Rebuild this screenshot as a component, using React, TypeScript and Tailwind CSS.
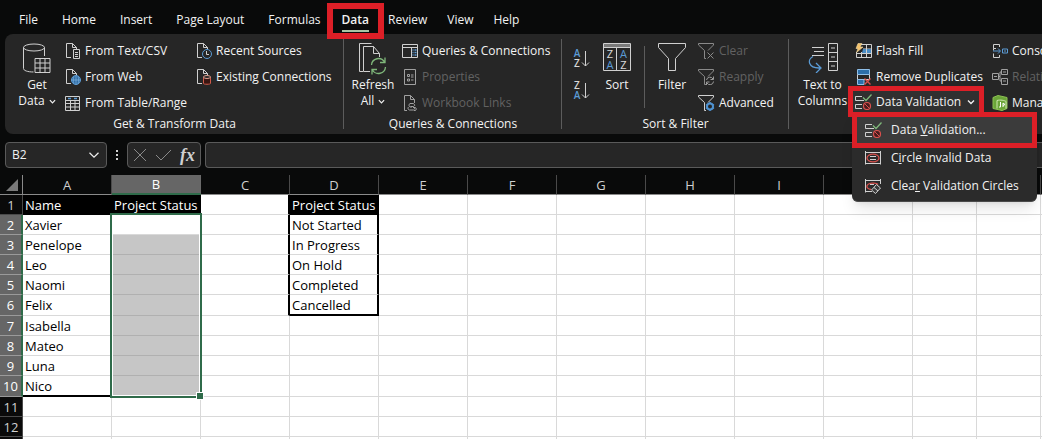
import { ReactNode } from "react";
import clsx from "clsx";

const TABS = ["File", "Home", "Insert", "Page Layout", "Formulas", "Data", "Review", "View", "Help"]

const COLUMNS = [
  { name: "A", width: 89 },
  { name: "B", width: 89 },
  { name: "C", width: 89 },
  { name: "D", width: 89 },
  { name: "E", width: 89 },
  { name: "F", width: 89 },
  { name: "G", width: 89 },
  { name: "H", width: 89 },
  { name: "I", width: 89 },
  { name: "J", width: 89 },
  { name: "K", width: 64 },
  { name: "L", width: 64 },
  { name: "M", width: 64 },
]

const NAMES = ["Name", "Xavier", "Penelope", "Leo", "Naomi", "Felix", "Isabella", "Mateo", "Luna", "Nico"]
const STATUSES = ["Project Status", "Not Started", "In Progress", "On Hold", "Completed", "Cancelled"]
const ROWS = [1, 2, 3, 4, 5, 6, 7, 8, 9, 10, 11, 12, 13]

/* ---------- icons ---------- */

function Icon({ w = 16, h = 16, children }: { w?: number, h?: number, children: ReactNode }) {
  return (
    <svg width={w} height={h} viewBox={`0 0 ${w} ${h}`} fill="none" stroke="#d0d0d0" className="shrink-0" aria-hidden="true">
      {children}
    </svg>
  )
}

function Chevron({ size = 7, stroke = 1.4 }: { size?: number, stroke?: number }) {
  return (
    <svg width={size} height={size} viewBox="0 0 8 8" fill="none" stroke="#f0f0f0" strokeWidth={stroke} className="inline-block shrink-0" aria-hidden="true">
      <path d="M1 2.5l3 3 3-3" />
    </svg>
  )
}

const PagePath = () => <path d="M6 14.5H1.5v-14h6l4 4V6M7.5.5v4h4" />

const GetDataIcon = () => (
  <Icon w={28} h={32}>
    <ellipse cx="11" cy="4.5" rx="10.5" ry="3.5" />
    <path d="M.5 4.5v21c0 2 4 3.5 10 3.5M21.5 4.5V13" />
    <path d="M12 15.5h15v14H12zM12 20h15M12 25h15M17 15.5v14M22 15.5v14" />
  </Icon>
)

const TextCsvIcon = () => (
  <Icon>
    <PagePath />
    <path d="M8.5 6.5h6v9h-6zM10 9.5h3M10 11.5h3M10 13.5h3" />
  </Icon>
)

const WebIcon = () => (
  <Icon>
    <PagePath />
    <circle cx="11" cy="11" r="4.5" fill="#2f6da5" stroke="#5b9bd5" />
    <path d="M6.5 11h9M11 6.5v9M9 7.5c-1 2-1 5 0 7M13 7.5c1 2 1 5 0 7" stroke="#8cbce6" strokeWidth=".6" />
  </Icon>
)

const TableIcon = () => (
  <Icon>
    <path d="M.5 1.5h14v14H.5zM.5 5.5h14M.5 8.5h14M.5 12h14M5.5 5.5v10M10 5.5v10" />
    <path d="M3 3.5h3M9 3.5h3" stroke="#5b9bd5" strokeWidth="1.5" />
  </Icon>
)

const RecentIcon = () => (
  <Icon>
    <PagePath />
    <circle cx="11" cy="11" r="4.5" stroke="#5b9bd5" fill="#262626" />
    <path d="M10.5 8v3.5H13" />
  </Icon>
)

const ExistingIcon = () => (
  <Icon>
    <PagePath />
    <path d="M7.5 8v6.5c0 1 7 1 7 0V8" stroke="#d05a4a" fill="#3a1612" />
    <ellipse cx="11" cy="8" rx="3.5" ry="1.5" stroke="#e0a090" fill="#262626" />
  </Icon>
)

const RefreshIcon = () => (
  <Icon w={28} h={32}>
    <path d="M4 28.500H.5V.5h12M11 28.500H4.500v-25h10l6 7V14M14.500 3.500v7h6" />
    <path d="M12.500 22a7 7 0 0 1 13-3M26.500 24a7 7 0 0 1-13 3M26 14.500V19.500h-5M13 31.500v-5h5" stroke="#7fb77a" strokeWidth="1.3" />
  </Icon>
)

const QueriesIcon = () => (
  <Icon>
    <path d="M.5 1.5h15v13H.5zM.5 4.500h15M9.500 4.500v10" />
    <path d="M10.500 7h1M10.500 9.500h1M10.500 12h1M12.500 7h2M12.500 9.500h2M12.500 12h2" stroke="#5b9bd5" strokeWidth="1.3" />
  </Icon>
)

const PropertiesIcon = () => (
  <Icon>
    <g stroke="#a0a0a0">
      <path d="M2.500.5h11v15h-11zM5.500 5.500h2v2h-2zM5.500 10h2v2h-2zM9 6h2.500M9 8h2.500M9 11h2.500" />
    </g>
  </Icon>
)

const LinksIcon = () => (
  <Icon>
    <g stroke="#a0a0a0">
      <path d="M5 15.500H2.500V.5h6l4 4V8M8.500.5v4h4" />
      <path d="M10 12H8a2 2 0 0 1 0-3.500h3a1.800 1.800 0 0 1 1.500 2.500M8.500 11.500h3a2 2 0 0 1 0 3.500h-4a1.800 1.800 0 0 1-1-3M11 12.500h2.500a2 2 0 0 1 0 3H12" />
    </g>
  </Icon>
)

function LetterSortIcon({ top, bottom }: { top: string, bottom: string }) {
  const color = (c: string) => c === "A" ? "#5b9bd5" : "#d8d8d8"
  return (
    <Icon w={18} h={22}>
      <g stroke="none" fontFamily="Open Sans, sans-serif" fontSize="10" fontWeight="600" textAnchor="middle">
        <text x="5" y="10" fill={color(top)}>{top}</text>
        <text x="5" y="20" fill={color(bottom)}>{bottom}</text>
      </g>
      <path d="M13.500 4v15M10 15.500l3.500 3.500 3.500-3.500" />
    </Icon>
  )
}

const SortIcon = () => (
  <Icon w={28} h={28}>
    <path d="M.5.5h27v27H.5zM13.500 4v23.500" />
    <path d="M1 2.500h26" stroke="#7a7a7a" strokeWidth="3" />
    <path d="M.5 4.500h27" />
    <g stroke="none" fontFamily="Open Sans, sans-serif" fontSize="11" textAnchor="middle">
      <text x="7" y="15" fill="#d8d8d8">Z</text>
      <text x="7" y="26" fill="#5b9bd5">A</text>
      <text x="20.500" y="15" fill="#5b9bd5">A</text>
      <text x="20.500" y="26" fill="#d8d8d8">Z</text>
    </g>
  </Icon>
)

const FilterIcon = () => (
  <Icon w={28} h={28}>
    <path d="M.5.5h27v4l-10 11v12h-7v-12L.5 4.500z" />
  </Icon>
)

function SmallFilter({ dim, children }: { dim?: boolean, children: ReactNode }) {
  return (
    <Icon w={17}>
      <path d="M8 15.500H6.500v-8L.5 2V.5h15V2l-5.500 5.500" stroke={dim ? "#8a8a8a" : "#d0d0d0"} />
      {children}
    </Icon>
  )
}

const ClearIcon = () => (
  <SmallFilter dim><path d="M9.500 9.500l6 6M15.500 9.500l-6 6" stroke="#8a8a8a" /></SmallFilter>
)

const ReapplyIcon = () => (
  <SmallFilter dim>
    <path d="M8.500 11a3.500 3.500 0 0 1 6.500-1M15.500 12.500a3.500 3.500 0 0 1-6.500 1.500M15.500 7.500v3h-3M8.500 16v-3h3" stroke="#9a9a9a" />
  </SmallFilter>
)

const AdvancedIcon = () => (
  <SmallFilter>
    <circle cx="12" cy="11.500" r="3" fill="#262626" stroke="#4f93d2" strokeWidth="2" />
    <path d="M12 7v2M12 14v2M8 9.500l1.500 1M14.500 12.500l1.500 1M8 13.500l1.500-1M14.500 10.500l1.500-1" stroke="#4f93d2" strokeWidth="1.5" />
  </SmallFilter>
)

const TextToColumnsIcon = () => (
  <Icon w={30} h={30}>
    <path d="M4 4.500h12M6 8.500h10M4 12.500h12" />
    <path d="M20.500.5h9v27h-9zM20.500 9.500h9M20.500 18.500h9M23 5h4M23 14h4M23 23h4" />
    <path d="M5 13.500c-6 3-5 12 7 11.500M8 20l5 5-5 5" stroke="#5b9bd5" strokeWidth="1.3" />
  </Icon>
)

const FlashIcon = () => (
  <Icon w={17}>
    <path d="M6 1.500h10.500v13H1.500V9M1.500 10.500h15M8 6h8.500M6.500 9v5.500M11.500 1.500v13" />
    <path d="M8 6h3v4H7zM12 6h4v4h-4z" fill="#4a8cc4" stroke="none" />
    <path d="M3 .5h4L5 4h3L1.500 9.500 3 5.500H1z" fill="#f4c26b" stroke="#f3dca8" strokeWidth=".6" />
  </Icon>
)

const DuplicatesIcon = () => (
  <Icon w={17}>
    <path d="M2.500.5h12v5h-12z" fill="#2c6ea8" stroke="#8fbfe8" />
    <path d="M2.500 5.500v5h12v-5" />
    <path d="M9 10.500H2.500v5H9z" fill="#2c6ea8" stroke="#8fbfe8" />
    <path d="M9.500 9.500l6 6M15.500 9.500l-6 6" stroke="#d8504d" strokeWidth="1.4" />
  </Icon>
)

const ValidationIcon = () => (
  <Icon w={17}>
    <path d="M7 2.500H.5v4H9M7 10.500H.5v4H7" />
    <path d="M8 3.500l3 3L16.500.5" stroke="#7fb77a" strokeWidth="1.3" />
    <circle cx="12" cy="12" r="3.500" stroke="#d8504d" fill="#4a1c1e" strokeWidth="1.2" />
    <path d="M9.500 9.500l5 5" stroke="#d8504d" />
  </Icon>
)

const CircleInvalidIcon = () => (
  <Icon w={17}>
    <path d="M.5 1v13.500M15.500 1v13.500M.5 2.500h15M.5 13.500h15M5 6.500h6M5 9.500h6" />
    <ellipse cx="8" cy="8" rx="6" ry="3.800" stroke="#d8504d" strokeWidth="1.3" />
  </Icon>
)

const ClearCirclesIcon = () => (
  <Icon w={17}>
    <path d="M.5 1v13.500M15.500 1v5M.5 2.500h15M.5 13.500H7M5 6.500h4" />
    <path d="M6 11.500C3 11 1.500 9.500 2 8c.5-3 9-4 11-1.500" stroke="#d8504d" strokeWidth="1.3" />
    <path d="M11.500 6.500l4 3.500-5 5.500-4-3.500zM9 9.500l4 3.500" fill="#3a3a3a" />
  </Icon>
)

const ConsolidateIcon = () => (
  <Icon>
    <path d="M7.500 4V1.500h-6v4H4M1.500 5.500v2M1.500 10.500v4h6V12" />
    <path d="M1 8h7M6 5.500L8.500 8 6 10.500M10.500 6h5v4h-5zM12 8h2" stroke="#5b9bd5" />
  </Icon>
)

const RelationsIcon = () => (
  <Icon>
    <g stroke="#a0a0a0">
      <path d="M.5 4.500h6v6h-6zM9.500.5h6v5h-6zM9.500 9.500h6v6h-6zM6.500 7.500H8V3h1.500M8 7.500V12h1.500M2 7.500h3M11 3h3M11 12h3" />
    </g>
  </Icon>
)

const ModelIcon = () => (
  <Icon>
    <path d="M1 2.500L6 .5l9 2v11l-5 2-9-2z" fill="#6ba539" stroke="#8cc152" />
    <path d="M5 5.500v8M5 5.500c3-1 8 0 9 1v7" stroke="#cfe8b0" />
    <path d="M8.500 7v5H7M11 12V8l2 1.500-2 1" stroke="#ffffff" />
  </Icon>
)

/* ---------- ribbon ---------- */

function RibbonGroup({ title, className, last, children }: { title?: string, className: string, last?: boolean, children: ReactNode }) {
  return (
    <section className={clsx("relative flex shrink-0 flex-col pt-1", className)}>
      <div className="flex h-[78px] items-start">{children}</div>
      {
        title &&
        <div className="text-center leading-4">{title}</div>
      }
      {!last && <div className="absolute right-0 top-[5px] h-[90px] w-px bg-[#5c5c5c]" />}
    </section>
  )
}

function BigButton({ icon, lines, menu, className }: { icon: ReactNode, lines: string[], menu?: boolean, className?: string }) {
  return (
    <button type="button" className={clsx("flex shrink-0 flex-col items-center pt-[5px] leading-4", className)}>
      <span className="flex h-[34px] items-start">{icon}</span>
      {lines.map((line, i) => (
        <span key={line} className="flex items-center gap-1 whitespace-nowrap">
          {line}
          {menu && i === lines.length - 1 && <Chevron />}
        </span>
      ))}
    </button>
  )
}

function SmallButton({ icon, label, disabled }: { icon: ReactNode, label: string, disabled?: boolean }) {
  return (
    <button type="button" disabled={disabled} className="flex h-[26px] items-center gap-1 whitespace-nowrap disabled:text-[#626262]">
      {icon}
      {label}
    </button>
  )
}

function MenuItem({ icon, children, active }: { icon: ReactNode, children: ReactNode, active?: boolean }) {
  return (
    <button
      type="button"
      role="menuitem"
      className={clsx(
        "flex w-full items-center gap-[9px] whitespace-nowrap text-left",
        active ? "relative z-10 -mb-1 h-9 border-[5px] border-[#dc1f27] bg-[#3b3b3b] pl-2" : "h-7 pl-[13px]"
      )}
    >
      {icon}
      <span>{children}</span>
    </button>
  )
}

function DataValidation() {
  return (
    <div className="relative">
      <button
        type="button"
        aria-expanded="true"
        className="relative -ml-[7px] -mt-1 flex h-[31px] w-[136px] items-center gap-1 whitespace-nowrap border-[5px] border-[#dc1f27] bg-[#303030] pl-[2px]"
      >
        <ValidationIcon />
        Data Validation
        <span className="ml-auto mr-1 flex"><Chevron size={8} /></span>
      </button>
      <div role="menu" className="absolute left-[-3px] top-[22px] z-10 w-[185px] rounded-b-md border-b border-[#4a4a4a] bg-[#2b2b2b] pb-px shadow-lg">
        <MenuItem icon={<ValidationIcon />} active>Data <u>V</u>alidation...</MenuItem>
        <MenuItem icon={<CircleInvalidIcon />}>C<u>i</u>rcle Invalid Data</MenuItem>
        <MenuItem icon={<ClearCirclesIcon />}>Clea<u>r</u> Validation Circles</MenuItem>
      </div>
    </div>
  )
}

function Ribbon() {
  return (
    <div className="ml-[5px] flex h-[100px] rounded-l-lg bg-[#262626]">
      <RibbonGroup title="Get & Transform Data" className="w-[339px]">
        <BigButton icon={<GetDataIcon />} lines={["Get", "Data"]} menu className="w-[60px] pl-1" />
        <div className="flex w-[131px] shrink-0 flex-col">
          <SmallButton icon={<TextCsvIcon />} label="From Text/CSV" />
          <SmallButton icon={<WebIcon />} label="From Web" />
          <SmallButton icon={<TableIcon />} label="From Table/Range" />
        </div>
        <div className="flex flex-col">
          <SmallButton icon={<RecentIcon />} label="Recent Sources" />
          <SmallButton icon={<ExistingIcon />} label="Existing Connections" />
        </div>
      </RibbonGroup>

      <RibbonGroup title="Queries & Connections" className="w-[218px]">
        <BigButton icon={<RefreshIcon />} lines={["Refresh", "All"]} menu className="w-[58px]" />
        <div className="flex flex-col">
          <SmallButton icon={<QueriesIcon />} label="Queries & Connections" />
          <SmallButton icon={<PropertiesIcon />} label="Properties" disabled />
          <SmallButton icon={<LinksIcon />} label="Workbook Links" disabled />
        </div>
      </RibbonGroup>

      <RibbonGroup title="Sort & Filter" className="w-[227px]">
        <div className="flex w-8 flex-col gap-[10px] pl-[10px] pt-[9px]">
          <button type="button" aria-label="Sort A to Z"><LetterSortIcon top="A" bottom="Z" /></button>
          <button type="button" aria-label="Sort Z to A"><LetterSortIcon top="Z" bottom="A" /></button>
        </div>
        <BigButton icon={<SortIcon />} lines={["Sort"]} className="w-[46px]" />
        <div className="mx-1 mt-2 h-[62px] w-px bg-[#5c5c5c]" />
        <BigButton icon={<FilterIcon />} lines={["Filter"]} className="w-[46px]" />
        <div className="flex flex-col pl-[3px]">
          <SmallButton icon={<ClearIcon />} label="Clear" disabled />
          <SmallButton icon={<ReapplyIcon />} label="Reapply" disabled />
          <SmallButton icon={<AdvancedIcon />} label="Advanced" />
        </div>
      </RibbonGroup>

      <RibbonGroup className="w-[340px]" last>
        <BigButton icon={<TextToColumnsIcon />} lines={["Text to", "Columns"]} className="w-[66px] pl-px" />
        <div className="flex w-[137px] shrink-0 flex-col">
          <SmallButton icon={<FlashIcon />} label="Flash Fill" />
          <SmallButton icon={<DuplicatesIcon />} label="Remove Duplicates" />
          <DataValidation />
        </div>
        <div className="flex flex-col">
          <SmallButton icon={<ConsolidateIcon />} label="Consolidate" />
          <SmallButton icon={<RelationsIcon />} label="Relationships" disabled />
          <SmallButton icon={<ModelIcon />} label="Manage Data Model" />
        </div>
      </RibbonGroup>
    </div>
  )
}

function Tabs() {
  return (
    <nav className="flex h-[34px] items-center pl-[7px]">
      {TABS.map((tab, i) => (
        tab === "Data" ?
          <button key={tab} type="button" className="relative z-10 -mx-[6px] mt-2 h-9 border-[6px] border-[#dc1f27] px-[9px] font-semibold">
            <span className="block border-b-2 border-[#a9c4a4] leading-5">{tab}</span>
          </button>
          :
          <button key={tab} type="button" className={clsx("mt-1.5 whitespace-nowrap", i < 5 ? "px-3" : "px-[10px]")}>{tab}</button>
      ))}
    </nav>
  )
}

function FormulaBar() {
  return (
    <div className="mt-2 flex h-[26px] items-stretch pl-[5px]">
      <label className="flex w-[102px] items-center rounded border border-[#5a5a5a] bg-[#262626] px-[6px]">
        <input aria-label="Name Box" defaultValue="B2" className="w-full min-w-0 bg-transparent outline-none" />
        <Chevron size={12} stroke={0.8} />
      </label>
      <div className="flex w-5 flex-col items-center justify-center gap-[2px]">
        <span className="size-[2px] bg-[#d0d0d0]" />
        <span className="size-[2px] bg-[#d0d0d0]" />
        <span className="size-[2px] bg-[#d0d0d0]" />
      </div>
      <div className="flex w-[74px] items-center justify-between rounded border border-[#5a5a5a] bg-[#262626] px-[5px]">
        <button type="button" aria-label="Cancel">
          <Icon w={14} h={14}><path d="M1 1l12 12M13 1L1 13" stroke="#8a8a8a" /></Icon>
        </button>
        <button type="button" aria-label="Enter">
          <Icon w={17} h={14}><path d="M1 7l5 5L16 2" stroke="#8a8a8a" /></Icon>
        </button>
        <button type="button" aria-label="Insert Function" className="font-['Liberation_Serif',serif] text-lg font-bold italic leading-5 text-[#d0d0d0]">fx</button>
      </div>
      <input aria-label="Formula Bar" className="ml-1 min-w-0 flex-1 rounded-l border border-r-0 border-[#5a5a5a] bg-[#262626] px-2 outline-none" />
    </div>
  )
}

/* ---------- sheet ---------- */

function Cell({ column, row }: { column: string, row: number }) {
  const name = column === "A" ? NAMES[row - 1] : undefined
  const status = column === "D" ? STATUSES[row - 1] : undefined
  const heading = row === 1 && ["A", "B", "D"].includes(column)
  const inSelection = column === "B" && row > 1 && row <= 10

  return (
    <td
      className={clsx(
        "border-b border-r p-0 pl-[2px] whitespace-nowrap",
        heading && "border-black bg-black text-white",
        !heading && (inSelection && row > 2 ? "border-[#b0b0b0] bg-[#c6c6c6]" : "border-[#d9d9d9] bg-white"),
        name && row === 10 && "border-b-2 border-b-black",
        status && "border-r-2 border-r-black",
        status && row === 6 && "border-b-2 border-b-black",
        column === "C" && row <= 6 && "border-r-2 border-r-black"
      )}
    >
      {name ?? status ?? (heading && "Project Status")}
    </td>
  )
}

function Sheet() {
  return (
    <div className="relative mt-[7px] w-max text-[13px]">
      <table className="w-max table-fixed border-separate border-spacing-0 leading-[18px] text-black">
        <colgroup>
          <col className="w-[23px]" />
          {COLUMNS.map((c) => <col key={c.name} style={{ width: c.width }} />)}
        </colgroup>
        <thead>
          <tr className="h-5 text-[#d0d0d0]">
            <th className="border-b border-r border-[#8a8a8a] p-0">
              <svg width="12" height="12" viewBox="0 0 12 12" className="ml-auto mr-1" aria-hidden="true">
                <path d="M12 0v12H0z" fill="#7a7a7a" />
              </svg>
            </th>
            {COLUMNS.map((c) => (
              <th
                key={c.name}
                scope="col"
                className={clsx(
                  "border-b border-r p-0 font-normal",
                  c.name === "B" ? "border-b-2 border-b-[#2f6b4a] border-r-[#6a6a6a] bg-[#666666] text-white" : "border-b-[#8a8a8a] border-r-[#4a4a4a]"
                )}
              >
                {c.name}
              </th>
            ))}
          </tr>
        </thead>
        <tbody>
          {ROWS.map((row) => (
            // the rows that close a list carry its thick bottom rule
            <tr key={row} className={row === 6 || row === 10 ? "h-[21px]" : "h-5"}>
              <th
                scope="row"
                className={clsx(
                  "border-b p-0 font-normal",
                  row > 1 && row <= 10 ? "border-b-[#9a9a9a] border-r-2 border-r-[#2f6b4a] bg-[#666666] text-white" : "border-b-[#4a4a4a] border-r border-r-[#4a4a4a] bg-[#0a0a0a] text-[#d0d0d0]"
                )}
              >
                {row}
              </th>
              {COLUMNS.map((c) => <Cell key={c.name} column={c.name} row={row} />)}
            </tr>
          ))}
        </tbody>
      </table>
      <div className="absolute left-[110px] top-[38px] h-[185px] w-[92px] border-2 border-[#2f6b4a]">
        <div className="h-full border border-white" />
        <div className="absolute -bottom-[3px] -right-[3px] size-[6px] bg-[#2f6b4a] outline outline-white" />
      </div>
    </div>
  )
}

export default function App() {
  return (
    <div className="h-screen overflow-hidden bg-[#090a0a] font-['Open_Sans','Noto_Sans',sans-serif] text-[12px] text-[#f2f2f2]">
      <Tabs />
      <Ribbon />
      <FormulaBar />
      <Sheet />
    </div>
  )
}
